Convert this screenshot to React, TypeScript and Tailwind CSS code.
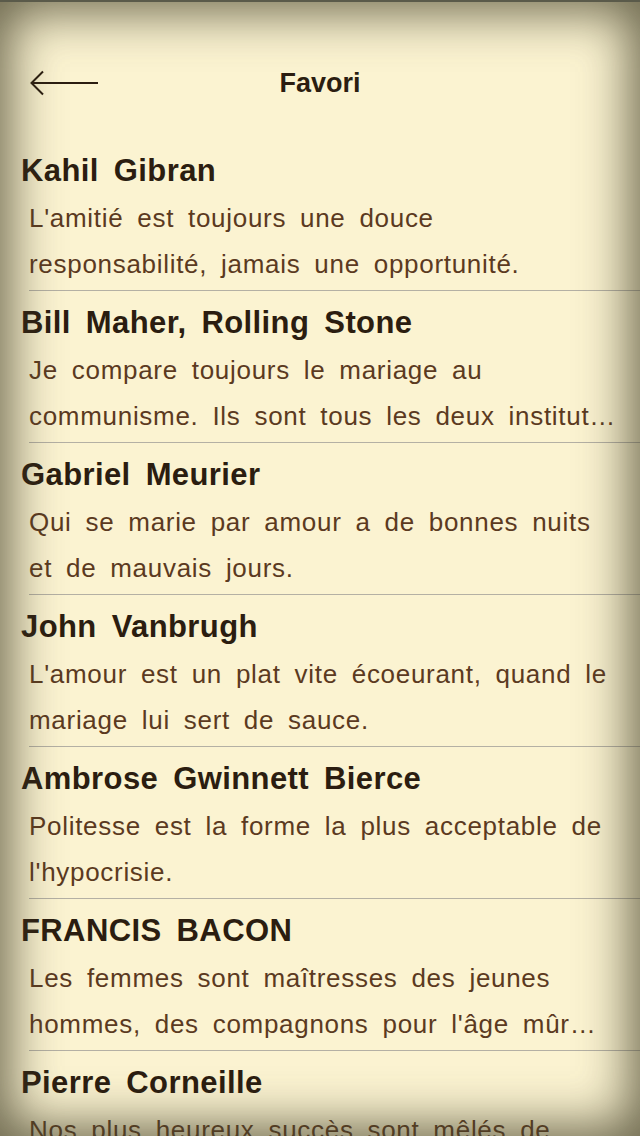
import React, { FC } from "react";

interface IQuote {
  author: string;
  lines: string[];
}

const quotes: IQuote[] = [
  {
    author: "Kahil Gibran",
    lines: ["L'amitié est toujours une douce", "responsabilité, jamais une opportunité."],
  },
  {
    author: "Bill Maher, Rolling Stone",
    lines: ["Je compare toujours le mariage au", "communisme. Ils sont tous les deux institut…"],
  },
  {
    author: "Gabriel Meurier",
    lines: ["Qui se marie par amour a de bonnes nuits", "et de mauvais jours."],
  },
  {
    author: "John Vanbrugh",
    lines: ["L'amour est un plat vite écoeurant, quand le", "mariage lui sert de sauce."],
  },
  {
    author: "Ambrose Gwinnett Bierce",
    lines: ["Politesse est la forme la plus acceptable de", "l'hypocrisie."],
  },
  {
    author: "FRANCIS BACON",
    lines: ["Les femmes sont maîtresses des jeunes", "hommes, des compagnons pour l'âge mûr…"],
  },
  {
    author: "Pierre Corneille",
    lines: ["Nos plus heureux succès sont mêlés de", "tristesse."],
  },
];

const QuoteRow: FC<IQuote> = ({ author, lines }) => {
  return (
    <div className="pt-[12px] pb-[3px] border-b border-[#b4b0a4] ml-[29px]">
      <p className="-ml-[8px] text-[31px] leading-[40px] font-bold text-[#2b1d10] tracking-[0.4px] [word-spacing:6px] whitespace-nowrap">
        {author}
      </p>
      <div className="mt-[4px] pr-[12px] text-[26px] leading-[46px] text-[#5b3a1f] tracking-[0.7px] [word-spacing:6px]">
        {lines.map((line, i) => (
          <p key={i} className="whitespace-nowrap overflow-hidden text-ellipsis">
            {line}
          </p>
        ))}
      </div>
    </div>
  );
};

export default function App() {
  return (
    <div
      className="relative h-[1136px] w-[640px] overflow-hidden bg-[#fbf3d1]"
      style={{ fontFamily: '"Liberation Sans", Arial, sans-serif' }}
    >
      <div className="mt-[44px] h-[78px] grid grid-cols-[1fr_auto_1fr] items-center">
        <div className="pl-[30px]">
          <svg width="70" height="26" viewBox="0 0 70 26" fill="none">
            <path
              d="M13 1.5 L1.5 13 L13 24.5 M1.5 13 H68"
              stroke="#2b1d10"
              strokeWidth="2"
            />
          </svg>
        </div>
        <h1 className="text-[27px] font-bold text-[#2b1d10]">Favori</h1>
        <div />
      </div>

      <div className="pt-[17px]">
        {quotes.map((q) => (
          <QuoteRow key={q.author} author={q.author} lines={q.lines} />
        ))}
      </div>

      {/* vignette */}
      <div className="pointer-events-none absolute inset-0 border-t-2 border-[#5a5a4a] shadow-[inset_0_0_50px_10px_rgba(70,66,42,0.8)]" />
    </div>
  );
}
